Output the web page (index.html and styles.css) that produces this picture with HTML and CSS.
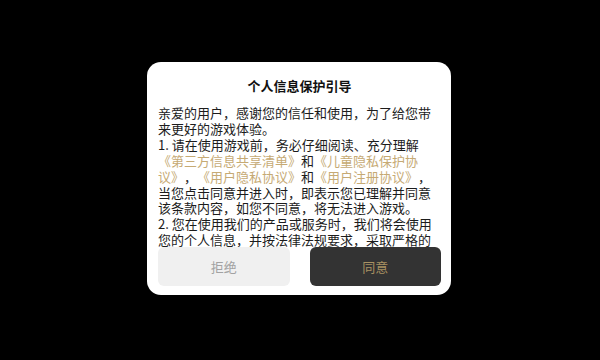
FILE: index.html
```html
<!DOCTYPE html>
<html lang="zh-CN">
<head>
<meta charset="utf-8">
<link rel="stylesheet" href="styles.css">
</head>
<body>
<div class="screen">
  <div class="dialog">
    <div class="title">个人信息保护引导</div>
    <div class="content">
      <p>亲爱的用户，感谢您的信任和使用，为了给您带来更好的游戏体验。</p>
      <p>1. 请在使用游戏前，务必仔细阅读、充分理解<span class="link">《第三方信息共享清单》</span>和<span class="link">《儿童隐私保护协议》</span>，<span class="link">《用户隐私协议》</span>和<span class="link">《用户注册协议》</span>，当您点击同意并进入时，即表示您已理解并同意该条款内容，如您不同意，将无法进入游戏。</p>
      <p>2. 您在使用我们的产品或服务时，我们将会使用您的个人信息，并按法律法规要求，采取严格的安全保护措施，保护您的个人信息安全。</p>
    </div>
    <div class="actions">
      <div class="btn btn-reject">拒绝</div>
      <div class="btn btn-agree">同意</div>
    </div>
  </div>
</div>
</body>
</html>
```

FILE: styles.css
```css
* { box-sizing: border-box; }
html, body {
  margin: 0;
  padding: 0;
  width: 600px;
  height: 360px;
  background: #000;
  overflow: hidden;
}
body {
  font-family: "Noto Sans CJK SC", "Noto Sans", sans-serif;
  text-spacing-trim: space-all;
}
.screen {
  width: 600px;
  height: 360px;
  padding: 62px 0 0 147px;
}
.dialog {
  width: 304px;
  height: 233px;
  background: #fff;
  border-radius: 14px;
  padding: 15px 10px 9px 11px;
  display: flex;
  flex-direction: column;
}
.title {
  font-size: 13px;
  font-weight: bold;
  line-height: 18px;
  height: 18px;
  text-align: center;
  color: #111;
}
.content {
  margin-top: 10px;
  flex: 1;
  overflow: hidden;
  padding-right: 4px;
  font-size: 13px;
  line-height: 15.9px;
  color: #1c1c1c;
  line-break: strict;
  text-spacing-trim: space-all;
}
.content p {
  margin: 0;
}
.link {
  color: #c6aa74;
}
.actions {
  display: flex;
  gap: 20px;
  height: 39px;
}
.btn {
  flex: 1;
  border-radius: 6px;
  display: flex;
  align-items: center;
  justify-content: center;
  font-size: 13px;
}
.btn-reject {
  background: #f0f0f0;
  color: #a2a2a2;
}
.btn-agree {
  background: #333333;
  color: #a89162;
}
```
